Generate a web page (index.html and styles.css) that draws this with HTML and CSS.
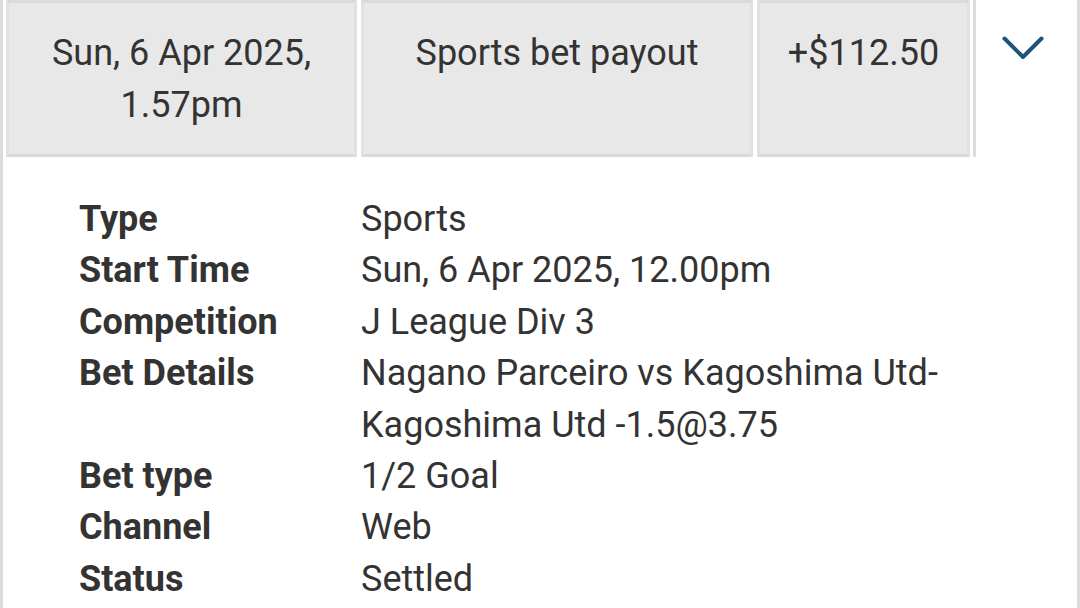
FILE: index.html
```html
<!DOCTYPE html>
<html lang="en">

<head>
    <meta charset="UTF-8">
    <meta name="viewport" content="width=device-width, initial-scale=1.0">
    <title>Transaction</title>
    <link rel="stylesheet" href="styles.css">
</head>

<body>
    <div class="txn">
        <div class="txn-head">
            <div class="cell cell-date">Sun, 6 Apr 2025,<br>1.57pm</div>
            <div class="cell cell-desc">Sports bet payout</div>
            <div class="cell cell-amount">+$112.50</div>
            <div class="cell-toggle">
                <svg class="chevron" width="42" height="24" viewBox="0 0 42 24">
                    <polyline points="2.5,2.5 21,21 39.5,2.5" fill="none" stroke="#1d5478" stroke-width="4" stroke-linecap="round" stroke-linejoin="round" />
                </svg>
            </div>
        </div>
        <dl class="txn-details">
            <dt>Type</dt>
            <dd>Sports</dd>
            <dt>Start Time</dt>
            <dd>Sun, 6 Apr 2025, 12.00pm</dd>
            <dt>Competition</dt>
            <dd>J League Div 3</dd>
            <dt>Bet Details</dt>
            <dd>Nagano Parceiro vs Kagoshima Utd-Kagoshima Utd -1.5@3.75</dd>
            <dt>Bet type</dt>
            <dd>1/2 Goal</dd>
            <dt>Channel</dt>
            <dd>Web</dd>
            <dt>Status</dt>
            <dd>Settled</dd>
        </dl>
    </div>
</body>

</html>
```

FILE: styles.css
```css
body {
    margin: 0;
    background: #fff;
    font-family: Roboto, "Liberation Sans", sans-serif;
    color: #333;
}

.txn {
    min-height: 608px;
    box-sizing: border-box;
    border-left: 3px solid #dcdcdc;
    border-right: 3px solid #dcdcdc;
}

.txn-head {
    display: flex;
    gap: 4px;
    padding-left: 3px;
}

.cell {
    box-sizing: border-box;
    height: 157px;
    padding-top: 24px;
    background: #e8e8e8;
    border: 3px solid;
    border-color: #dadada #e1e1e1;
    font-size: 36px;
    line-height: 52px;
    text-align: center;
}

.cell-date {
    width: 351px;
}

.cell-desc {
    width: 392px;
}

.cell-amount {
    width: 213px;
}

.cell-toggle {
    flex: 1;
    height: 157px;
    box-sizing: border-box;
    margin-left: -1px;
    padding: 36px 0 0 26px;
    border-left: 3px solid #dcdcdc;
}

.chevron {
    display: block;
}

.txn-details {
    display: grid;
    grid-template-columns: 282px 1fr;
    margin: 0;
    padding: 37px 110px 0 76px;
    font-size: 36px;
    line-height: 51.4px;
}

.txn-details dt {
    font-weight: 700;
}

.txn-details dd {
    margin: 0;
}
```
